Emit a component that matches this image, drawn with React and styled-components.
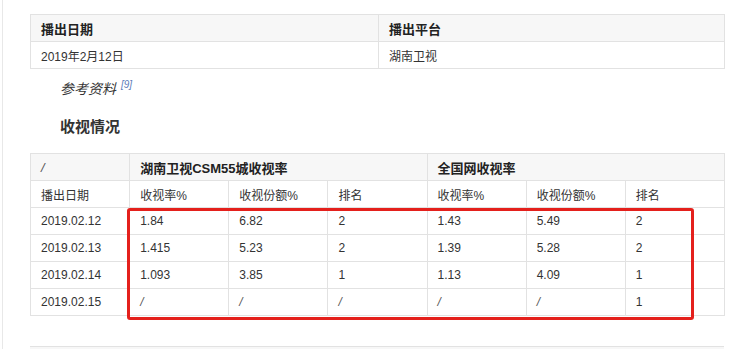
import React from "react";
import styled, { createGlobalStyle } from "styled-components";

const Global = createGlobalStyle`
  html, body { margin: 0; padding: 0; background: #fff; }
  body { font-family: "Liberation Sans", Arial, "Noto Sans CJK SC", sans-serif; color: #333; }
`;

const Page = styled.div`
  margin-left: 2px;
  border-left: 1px solid #e8e8e8;
  padding: 14px 0 0 27px;
  box-sizing: border-box;
  overflow: hidden;
  height: 349px;
`;

const Table = styled.table`
  border-collapse: collapse;
  table-layout: fixed;
  width: ${(p) => p.$width}px;
  font-size: 12px;
  color: #333;
`;

const Th = styled.th`
  background: #f7f7f7;
  border: 1px solid #e2e2e2;
  height: 27px;
  padding: 0 0 0 10px;
  text-align: left;
  font-size: 13px;
  font-weight: ${(p) => (p.$plain ? 400 : 700)};
  color: ${(p) => (p.$plain ? "#555" : "#222")};
  font-style: ${(p) => (p.$plain ? "italic" : "normal")};
  box-sizing: border-box;
`;

const Td = styled.td`
  border: 1px solid #e2e2e2;
  height: 26px;
  padding: 0 0 0 10px;
  text-align: left;
  white-space: nowrap;
  font-style: ${(p) => (p.$slash ? "italic" : "normal")};
  color: ${(p) => (p.$slash ? "#555" : "#333")};
`;

const Ref = styled.div`
  margin: 9px 0 0 30px;
  height: 20px;
  line-height: 20px;
  font-size: 14px;
  font-style: italic;
  color: #333;
  font-family: "Noto Sans CJK SC", sans-serif;
`;

const Sup = styled.sup`
  font-size: 10px;
  font-style: italic;
  color: #5b7bb8;
  margin-left: 5px;
  font-family: "Liberation Sans", Arial, sans-serif;
  vertical-align: 6px;
  line-height: 0;
`;

const Heading = styled.h3`
  margin: 18px 0 0 30px;
  height: 22px;
  line-height: 22px;
  font-size: 15px;
  font-weight: 700;
  color: #333;
`;

const TableWrap = styled.div`
  position: relative;
  margin-top: 15px;
  width: 694px;
`;

const Highlight = styled.div`
  position: absolute;
  left: 97px;
  top: 55px;
  width: 567px;
  height: 112px;
  border: 3px solid #e4201c;
  border-radius: 3px;
  box-sizing: border-box;
  pointer-events: none;
`;

const NextTable = styled.div`
  margin-top: 30px;
  width: 694px;
  height: 10px;
  border-top: 1px solid #e2e2e2;
  background: #f7f7f7;
`;

const rows = [
  ["2019.02.12", "1.84", "6.82", "2", "1.43", "5.49", "2"],
  ["2019.02.13", "1.415", "5.23", "2", "1.39", "5.28", "2"],
  ["2019.02.14", "1.093", "3.85", "1", "1.13", "4.09", "1"],
  ["2019.02.15", "/", "/", "/", "/", "/", "1"],
];

const sub = ["播出日期", "收视率%", "收视份额%", "排名", "收视率%", "收视份额%", "排名"];

export default function App() {
  return (
    <>
      <Global />
      <Page>
        <Table $width={695}>
          <colgroup>
            <col style={{ width: 348 }} />
            <col />
          </colgroup>
          <thead>
            <tr>
              <Th>播出日期</Th>
              <Th>播出平台</Th>
            </tr>
          </thead>
          <tbody>
            <tr>
              <Td>2019年2月12日</Td>
              <Td>湖南卫视</Td>
            </tr>
          </tbody>
        </Table>
        <Ref>
          参考资料<Sup>[9]</Sup>
        </Ref>
        <Heading>收视情况</Heading>
        <TableWrap>
          <Table $width={695}>
            <colgroup>
              {sub.map((_, i) => (
                <col key={i} style={{ width: 99 }} />
              ))}
            </colgroup>
            <thead>
              <tr>
                <Th $plain>/</Th>
                <Th colSpan={3}>湖南卫视CSM55城收视率</Th>
                <Th colSpan={3}>全国网收视率</Th>
              </tr>
            </thead>
            <tbody>
              <tr>
                {sub.map((s, i) => (
                  <Td key={i}>{s}</Td>
                ))}
              </tr>
              {rows.map((r) => (
                <tr key={r[0]}>
                  {r.map((c, i) => (
                    <Td key={i} $slash={c === "/"}>
                      {c}
                    </Td>
                  ))}
                </tr>
              ))}
            </tbody>
          </Table>
          <Highlight />
        </TableWrap>
        <NextTable />
      </Page>
    </>
  );
}
